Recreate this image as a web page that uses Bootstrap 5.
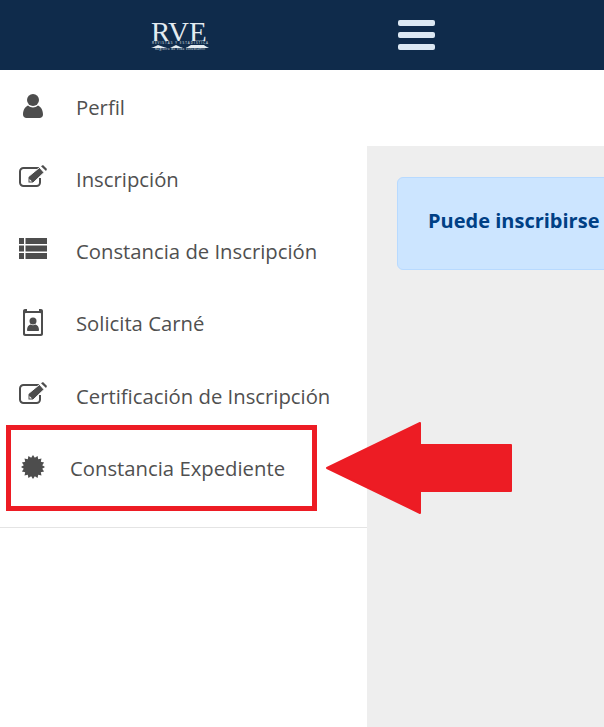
<!DOCTYPE html>
<html lang="es">
<head>
    <meta charset="UTF-8">
    <title>Constancia Expediente</title>
    <link href="https://cdn.jsdelivr.net/npm/bootstrap@5.3.0/dist/css/bootstrap.min.css" rel="stylesheet">
    <style>
        html, body { height: 727px; overflow: hidden; }
        body { font-family: "Open Sans", "Noto Sans", sans-serif; background: #fff; position: relative; }
        .top-bar { height: 70px; background: #0f2b4b; }
        .brand-area { width: 398px; padding-right: 38px; }
        .rve-logo { fill: #e3ebf1; margin-top: 3px; }
        .rve-name { font-family: "Liberation Serif", serif; font-size: 29px; }
        .rve-tiny { font-size: 3px; }
        .menu-toggle { width: 37px; gap: 6px; background: none; border: 0; }
        .menu-toggle span { height: 6px; background: #dce8f3; border-radius: 2px; }
        .page-body { height: 657px; }
        .side-menu { width: 367px; padding-top: 1px; }
        .side-item { height: 72.2px; color: #505050; font-size: 20.3px; padding-left: 19px; text-decoration: none; }
        .side-item svg { fill: #4d4d4d; flex: none; }
        .side-icon { width: 28px; margin-right: 29px; margin-bottom: 6px; flex: none; }
        .side-icon.icon-low { margin-bottom: 3px; }
        .side-item.is-marked { padding-left: 21px; }
        .is-marked .side-icon { width: 24px; margin-right: 25px; margin-bottom: 3px; }
        .side-sep { margin: 23px 0 0; border-top: 1px solid #e4e4e4; opacity: 1; }
        .content-area { width: 700px; }
        .content-gap { height: 76px; }
        .content-grey { background: #eeeeee; padding: 31px 30px; }
        .notice { width: 620px; height: 93px; background: #cce5ff; border: 1px solid #b8daff; border-radius: 6px; color: #004085; font-size: 20px; font-weight: 700; padding: 0 0 6px 30px; }
        .mark-box { position: absolute; left: 6px; top: 425px; width: 311px; height: 86px; border: 5px solid #ed1c24; }
        .mark-arrow { position: absolute; left: 326px; top: 421px; }
    </style>
</head>
<body>

    <nav class="top-bar d-flex align-items-center">
        <div class="brand-area d-flex justify-content-center">
            <svg class="rve-logo" width="58" height="39" viewBox="0 -6 58 39">
                <text class="rve-name" x="0" y="19">RVE</text>
                <rect x="0" y="18" width="58" height="4" fill="#0f2b4b"/>
                <text class="rve-tiny" x="1" y="21" textLength="56">REVISTAS Y ESTADÍSTICA</text>
                <path d="M0 25C3 24 5 23 7 22c3 1 5 2 9 3h3c2-1 4-2 6-3 2 1 4 2 7 3h3c2-1 3-2 5-3h13c1 1 3 2 5 3z"/>
                <text class="rve-tiny" x="4" y="27" textLength="50">Registro de Vida Estudiantil</text>
            </svg>
        </div>
        <button class="menu-toggle d-flex flex-column p-0" type="button" aria-label="Menu">
            <span class="w-100"></span>
            <span class="w-100"></span>
            <span class="w-100"></span>
        </button>
    </nav>

    <div class="page-body d-flex">
        <aside class="side-menu flex-shrink-0">
            <a class="side-item d-flex align-items-center" href="#">
                <span class="side-icon icon-low d-flex justify-content-center">
                    <svg width="20" height="24" viewBox="0 0 20 24"><circle cx="10" cy="6" r="6"/><path d="M0 20.500C0 15.500 2.500 12.500 5 11.500c1.400 1.300 3.100 2 5 2s3.600-.7 5-2c2.500 1 5 4 5 9 0 2-1.500 3.500-3.500 3.500h-13C1.500 24 0 22.500 0 20.500z"/></svg>
                </span>
                <span>Perfil</span>
            </a>
            <a class="side-item d-flex align-items-center" href="#">
                <span class="side-icon d-flex justify-content-center">
                    <svg width="28" height="22" viewBox="0 0 28 22"><path fill="none" stroke="#4d4d4d" stroke-width="2" d="M20 3H4.500A3.500 3.500 0 0 0 1 6.500v11A3.500 3.500 0 0 0 4.500 21h13a3.500 3.500 0 0 0 3.500-3.500V13"/><path stroke="#fff" d="M9 12 20.500 2.500 25 7.500 14 18H9z"/><path fill="#fff" d="M10.500 14v2.500H13z"/><path d="M22 1.200 24 0l4 4-1 2z"/></svg>
                </span>
                <span>Inscripción</span>
            </a>
            <a class="side-item d-flex align-items-center" href="#">
                <span class="side-icon d-flex justify-content-center">
                    <svg width="28" height="21" viewBox="0 0 28 21"><path d="M0 0h5v6H0zM6.500 0H28v6H6.500zM0 7.500h5v6H0zM6.500 7.500H28v6H6.500zM0 15h5v6H0zM6.500 15H28v6H6.500z"/></svg>
                </span>
                <span>Constancia de Inscripción</span>
            </a>
            <a class="side-item d-flex align-items-center" href="#">
                <span class="side-icon icon-low d-flex justify-content-center">
                    <svg width="20" height="27" viewBox="0 0 20 27"><path fill-rule="evenodd" d="M2 0h2v2h12V0h2c1.100 0 2 .9 2 2v23c0 1.100-.9 2-2 2H2c-1.100 0-2-.9-2-2V2C0 .9.900 0 2 0zm1 4c-.6 0-1 .4-1 1v19c0 .6.400 1 1 1h14c.6 0 1-.4 1-1V5c0-.6-.4-1-1-1z"/><circle cx="10" cy="12" r="3.500"/><path d="M4 21c0-3 1.500-5 3.500-5.500 1.500 1 3.500 1 5 0 2 .5 3.500 2.500 3.500 5.500 0 .6-.4 1-1 1H5c-.6 0-1-.4-1-1z"/></svg>
                </span>
                <span>Solicita Carné</span>
            </a>
            <a class="side-item d-flex align-items-center" href="#">
                <span class="side-icon d-flex justify-content-center">
                    <svg width="28" height="22" viewBox="0 0 28 22"><path fill="none" stroke="#4d4d4d" stroke-width="2" d="M20 3H4.500A3.500 3.500 0 0 0 1 6.500v11A3.500 3.500 0 0 0 4.500 21h13a3.500 3.500 0 0 0 3.500-3.500V13"/><path stroke="#fff" d="M9 12 20.500 2.500 25 7.500 14 18H9z"/><path fill="#fff" d="M10.500 14v2.500H13z"/><path d="M22 1.200 24 0l4 4-1 2z"/></svg>
                </span>
                <span>Certificación de Inscripción</span>
            </a>
            <a class="side-item is-marked d-flex align-items-center" href="#">
                <span class="side-icon d-flex justify-content-center">
                    <svg width="24" height="24" viewBox="0 0 24 24"><polygon points="12,0 13.83,2.78 16.59,.91 17.22,4.18 20.49,3.51 19.82,6.78 23.09,7.41 21.22,10.17 24,12 21.22,13.83 23.09,16.59 19.82,17.22 20.49,20.49 17.22,19.82 16.59,23.09 13.83,21.22 12,24 10.17,21.22 7.41,23.09 6.78,19.82 3.51,20.49 4.18,17.22 .91,16.59 2.78,13.83 0,12 2.78,10.17 .91,7.41 4.18,6.78 3.51,3.51 6.78,4.18 7.41,.91 10.17,2.78"/></svg>
                </span>
                <span>Constancia Expediente</span>
            </a>
            <hr class="side-sep">
        </aside>

        <main class="content-area flex-shrink-0 d-flex flex-column">
            <div class="content-gap"></div>
            <div class="content-grey flex-grow-1">
                <div class="notice d-flex align-items-center">Puede inscribirse</div>
            </div>
        </main>
    </div>

    <div class="mark-box"></div>
    <svg class="mark-arrow" width="187" height="94" viewBox="0 0 187 94"><path fill="#ed1c24" stroke="#ed1c24" stroke-width="2" stroke-linejoin="round" d="M1 47 94 2v22h91v46H94v22z"/></svg>

</body>
</html>
